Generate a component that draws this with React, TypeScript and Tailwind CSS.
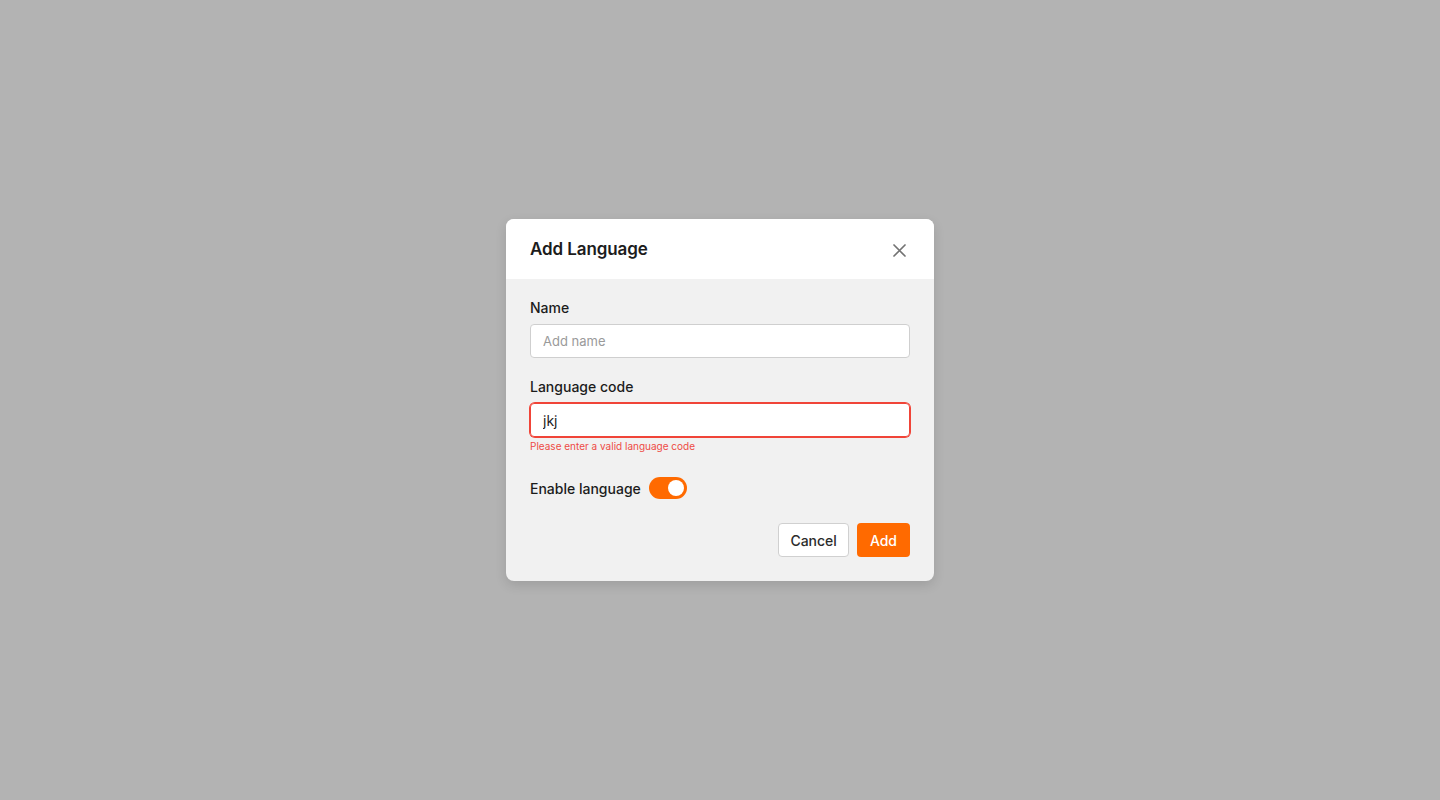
import React, { useState } from 'react';

function CloseIcon(): React.ReactElement {
  return (
    <svg width="13" height="13" viewBox="0 0 13 13" fill="none">
      <path d="M1 1L12 12M12 1L1 12" stroke="#737373" strokeWidth="1.7" strokeLinecap="round" />
    </svg>
  );
}

export default function App(): React.ReactElement {
  const [code, setCode] = useState('jkj');
  const [enabled, setEnabled] = useState(true);

  return (
    <div className="min-h-screen w-full bg-[#b3b3b3] flex items-center justify-center font-['Inter',sans-serif]">
      <div className="w-[428px] rounded-lg overflow-hidden bg-[#f1f1f1] shadow-[0_4px_12px_rgba(0,0,0,0.12)]">
        {/* Header */}
        <div className="h-[60px] bg-white pl-6 pr-[23px] pt-[2px] flex items-center justify-between">
          <h2 className="text-[17px] font-semibold text-[#1c1c1c] tracking-[-0.1px]">Add Language</h2>
          <button className="w-6 h-6 flex items-center justify-center">
            <CloseIcon />
          </button>
        </div>

        {/* Body */}
        <div className="px-6 pt-[19px] pb-6">
          <label className="block text-[14px] leading-5 font-medium text-[#1c1c1c]">Name</label>
          <input
            className="mt-[6px] w-full h-[34px] rounded-[4px] border border-[#cfcfcf] bg-white px-3 text-[13px] text-[#1c1c1c] placeholder:text-[#9a9a9a] outline-none"
            placeholder="Add name"
          />

          <label className="block mt-[19px] text-[14px] leading-5 font-medium text-[#1c1c1c]">Language code</label>
          <div className="mt-[6px] rounded-[5px] ring-1 ring-[#f04438]">
            <input
              className="w-full h-[34px] rounded-[4px] border border-[#f04438] bg-white px-3 text-[14px] text-[#1c1c1c] outline-none"
              value={code}
              onChange={(e) => setCode(e.target.value)}
            />
          </div>
          <p className="mt-[3px] text-[10px] leading-3 text-[#ee4b45]">Please enter a valid language code</p>

          <div className="mt-[25px] flex items-center gap-2">
            <span className="text-[14px] font-medium text-[#1c1c1c]">Enable language</span>
            <button
              onClick={() => setEnabled(!enabled)}
              className={
                'relative w-[38px] h-[22px] rounded-full ' + (enabled ? 'bg-[#ff6a00]' : 'bg-[#cfcfcf]')
              }
            >
              <span
                className={
                  'absolute top-[3px] w-4 h-4 rounded-full bg-white ' + (enabled ? 'left-[19px]' : 'left-[3px]')
                }
              />
            </button>
          </div>

          <div className="mt-6 flex justify-end gap-2">
            <button className="h-[34px] px-[11px] rounded-[4px] border border-[#d0d0d0] bg-white text-[14px] font-medium text-[#2b2b2b]">
              Cancel
            </button>
            <button className="h-[34px] px-[13px] rounded-[4px] bg-[#ff6a00] text-[14px] font-medium text-white">
              Add
            </button>
          </div>
        </div>
      </div>
    </div>
  );
}
